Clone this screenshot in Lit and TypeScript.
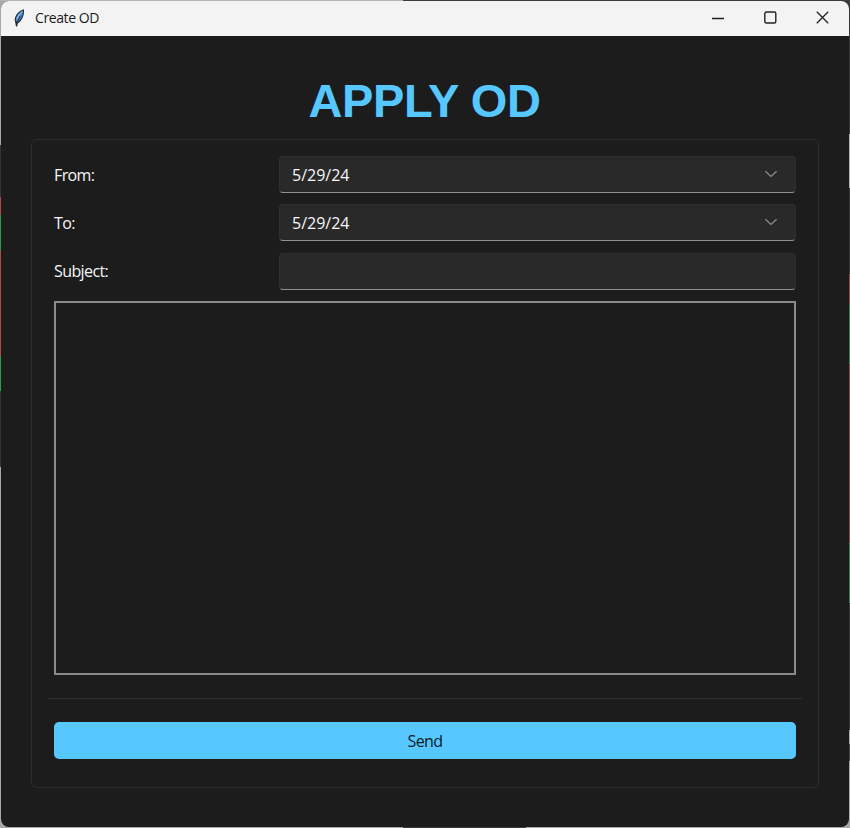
import { LitElement, html, css, svg } from "lit";
import { customElement } from "lit/decorators.js";

const chevron = html`<svg class="chevron" width="14" height="8" viewBox="0 0 14 8">
  <path d="M1.4 1.2 7 6.4 12.6 1.2" fill="none" stroke="#8b8b8b" stroke-width="1.3" />
</svg>`;

const feather = svg`
  <path d="M10.9 .3C7 1.2 2.4 5.2 1.6 10.4L2.2 13.4 3 17.6H4.2L4.6 14.6C8.8 12.4 11.8 6.2 10.9 .3Z" fill="#2b3138"/>
  <path d="M10 1.5C6.8 2.8 3 6.6 2.6 11.4L4 13.2C7.8 10.8 10.4 6 10 1.5Z" fill="#3f7fca"/>
  <path d="M9.3 2.6C7.2 4.2 5 7 3.8 10.2" fill="none" stroke="#a3cdf2" stroke-width="1.1"/>
  <path d="M7.2 7C5.8 9.4 4.4 12.4 3.6 16.6" fill="none" stroke="#20252b" stroke-width=".8"/>`;

@customElement("app-root")
export class AppRoot extends LitElement {
  static styles = css`
    :host {
      display: block;
      box-sizing: border-box;
      height: 828px;
      padding: 1px;
      font-family: "Open Sans", "Noto Sans", sans-serif;
      font-size: 16px;
      color: #f6f6f6;
      background:
        linear-gradient(90deg, #b5b5b5 403px, #3c3c3c 403px) top / 100% 1px no-repeat,
        linear-gradient(90deg, #a8a8a8 403px, #3c3c3c 403px 526px, #a8a8a8 526px) bottom / 100% 10px no-repeat,
        linear-gradient(#a8a8a8 145px, #353535 145px 197px, #b04a3c 197px 215px, #26a050 215px 250px,
          #b04a3c 250px 356px, #26a050 356px 391px, #353535 391px 467px, #a8a8a8 467px) left / 10px 100% no-repeat,
        linear-gradient(#38393b 134px, #b4b4b4 134px 188px, #38393b 188px 274px, #9b4942 274px 304px,
          #36885a 304px 364px, #91463f 364px 543px, #36885a 543px 603px, #38393b 603px 730px,
          #a8a8a8 730px 744px, #444 744px 761px, #a8a8a8 761px) right / 10px 100% no-repeat;
    }
    .window {
      box-sizing: border-box;
      height: 826px;
      display: flex;
      flex-direction: column;
      border-radius: 8px;
      overflow: hidden;
      background: #1c1c1c;
    }
    .titlebar {
      height: 35px;
      flex: none;
      display: flex;
      align-items: center;
      background: #f3f3f3;
      color: #1a1a1a;
    }
    .feather { margin: 0 8px 2px 12px; }
    .caption { flex: 1; font-size: 14px; letter-spacing: -0.4px; padding-bottom: 2px; }
    .controls { display: flex; align-items: center; gap: 39.5px; margin-right: 20px; padding-bottom: 2px; }
    .controls svg, .feather, .chevron { display: block; flex: none; }
    h1 {
      margin: 39px 0 12px;
      height: 52px;
      padding-right: 1px;
      text-align: center;
      color: #57c8ff;
      font: bold 47px/52px "Liberation Sans", Arial, sans-serif;
      letter-spacing: -0.4px;
    }
    .frame {
      box-sizing: border-box;
      margin: 0 30px;
      height: 649px;
      padding: 16px 22px;
      border: 1px solid #2c2c2c;
      border-radius: 6px;
      display: flex;
      flex-direction: column;
    }
    .row {
      display: grid;
      grid-template-columns: 225px 1fr;
      align-items: center;
      height: 37px;
      margin-bottom: 11.3px;
    }
    .label { letter-spacing: -0.6px; }
    .field {
      box-sizing: border-box;
      height: 37px;
      padding: 0 17px 0 12px;
      display: flex;
      align-items: center;
      justify-content: space-between;
      background: #292929;
      border: 1px solid #2f2f2f;
      border-bottom-color: #8f8f8f;
      border-radius: 4px;
    }
    .chevron { margin-bottom: 2px; }
    .message {
      box-sizing: border-box;
      height: 374px;
      border: 2px solid #8b8b8b;
    }
    .rule { height: 1px; margin: 23px -6px; background: #2f2f2f; }
    .send {
      height: 37px;
      line-height: 38px;
      border-radius: 5px;
      text-align: center;
      letter-spacing: -0.6px;
      background: #57c8ff;
      color: #0c1b25;
    }
  `;

  private row(label: string, value?: string) {
    return html`<div class="row">
      <span class="label">${label}</span>
      <div class="field">${value ? html`<span>${value}</span>${chevron}` : ""}</div>
    </div>`;
  }

  render() {
    return html`<div class="window">
      <div class="titlebar">
        <svg class="feather" width="14" height="18" viewBox="0 0 14 18">${feather}</svg>
        <span class="caption">Create OD</span>
        <div class="controls">
          <svg width="12" height="12" viewBox="0 0 12 12"><path d="M0 6.5H12" stroke="#222" stroke-width="1.4" /></svg>
          <svg width="13" height="13" viewBox="0 0 13 13">
            <rect x=".8" y="1" width="11" height="11" rx="1.5" fill="none" stroke="#222" stroke-width="1.4" />
          </svg>
          <svg width="13" height="13" viewBox="0 0 13 13"><path d="M.8 .8 12.2 12.2M12.2 .8 .8 12.2" stroke="#222" stroke-width="1.3" /></svg>
        </div>
      </div>
      <h1>APPLY OD</h1>
      <div class="frame">
        ${this.row("From:", "5/29/24")} ${this.row("To:", "5/29/24")} ${this.row("Subject:")}
        <div class="message"></div>
        <div class="rule"></div>
        <div class="send">Send</div>
      </div>
    </div>`;
  }
}
